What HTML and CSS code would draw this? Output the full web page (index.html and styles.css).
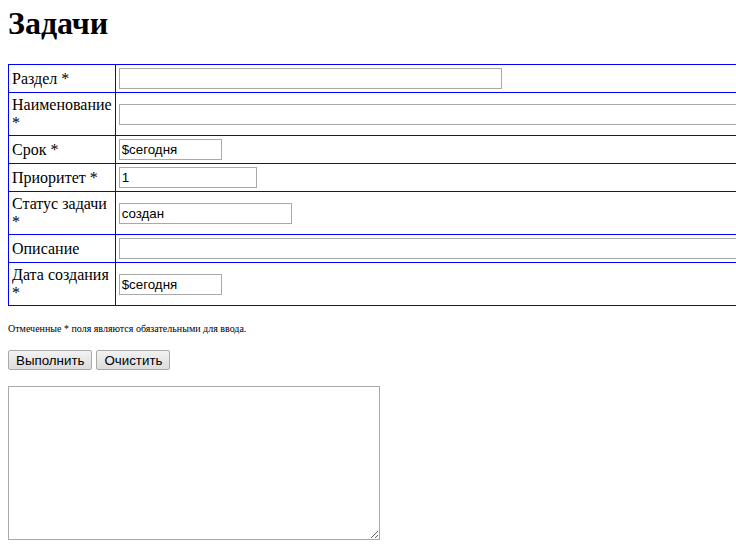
FILE: index.html
```html
<!DOCTYPE html>
<html lang="ru">
<head>
    <meta charset="UTF-8">
    <title>Задачи</title>
    <link rel="stylesheet" href="styles.css">
</head>
<body>

    <h1>Задачи</h1>

    <!-- Форма новой задачи -->
    <form class="task-form">
        <table class="fields">
            <tr>
                <td class="label">Раздел *</td>
                <td><input type="text" class="field-section"></td>
            </tr>
            <tr>
                <td class="label">Наименование *</td>
                <td><input type="text" class="field-wide"></td>
            </tr>
            <tr>
                <td class="label">Срок *</td>
                <td><input type="text" class="field-date" value="$сегодня"></td>
            </tr>
            <tr>
                <td class="label">Приоритет *</td>
                <td><input type="text" class="field-priority" value="1"></td>
            </tr>
            <tr>
                <td class="label">Статус задачи *</td>
                <td><input type="text" class="field-status" value="создан"></td>
            </tr>
            <tr>
                <td class="label">Описание</td>
                <td><input type="text" class="field-wide"></td>
            </tr>
            <tr>
                <td class="label">Дата создания *</td>
                <td><input type="text" class="field-date" value="$сегодня"></td>
            </tr>
        </table>

        <p class="note">Отмеченные * поля являются обязательными для ввода.</p>

        <div class="actions">
            <button type="button">Выполнить</button>
            <button type="reset">Очистить</button>
        </div>

        <!-- Ответ сервера -->
        <textarea class="output"></textarea>
    </form>

</body>
</html>
```

FILE: styles.css
```css
/* Общие стили */
html {
    overflow-x: hidden;
}

body {
    margin: 0;
    padding: 0 8px;
    font-family: 'Liberation Serif', 'Times New Roman', serif;
    font-size: 16px;
    color: #000;
    background: #fff;
}

h1 {
    margin: 5px 0 22px;
    font-size: 32px;
    font-weight: bold;
}

/* Таблица полей */
.fields {
    border-collapse: collapse;
}

.fields td {
    border: 1px solid #0000ff;
    padding: 3px;
    vertical-align: middle;
}

.fields input {
    box-sizing: border-box;
    height: 21px;
    margin: 0;
    padding: 1px 2px;
    border: 1px solid #a9a9a9;
    font-family: 'Liberation Sans', Arial, sans-serif;
    font-size: 13.33px;
    color: #000;
    vertical-align: middle;
}

.field-section {
    width: 383px;
}

.field-wide {
    width: 760px;
}

.field-date {
    width: 103px;
}

.field-priority {
    width: 138px;
}

.field-status {
    width: 173px;
}

/* Примечание */
.note {
    margin: 17px 0 0;
    font-size: 10px;
}

/* Кнопки */
.actions {
    display: flex;
    gap: 4px;
    margin: 16px 0 16px;
}

.actions button {
    height: 20px;
    padding: 1px 7px;
    border: 1px solid #a9a9a9;
    border-radius: 2px;
    background: linear-gradient(#f2f2f2, #dcdcdc);
    font-family: 'Liberation Sans', Arial, sans-serif;
    font-size: 13.33px;
    color: #000;
}

/* Поле вывода */
.output {
    display: block;
    box-sizing: border-box;
    width: 372px;
    height: 154px;
    margin: 0;
    border: 1px solid #a9a9a9;
}
```
